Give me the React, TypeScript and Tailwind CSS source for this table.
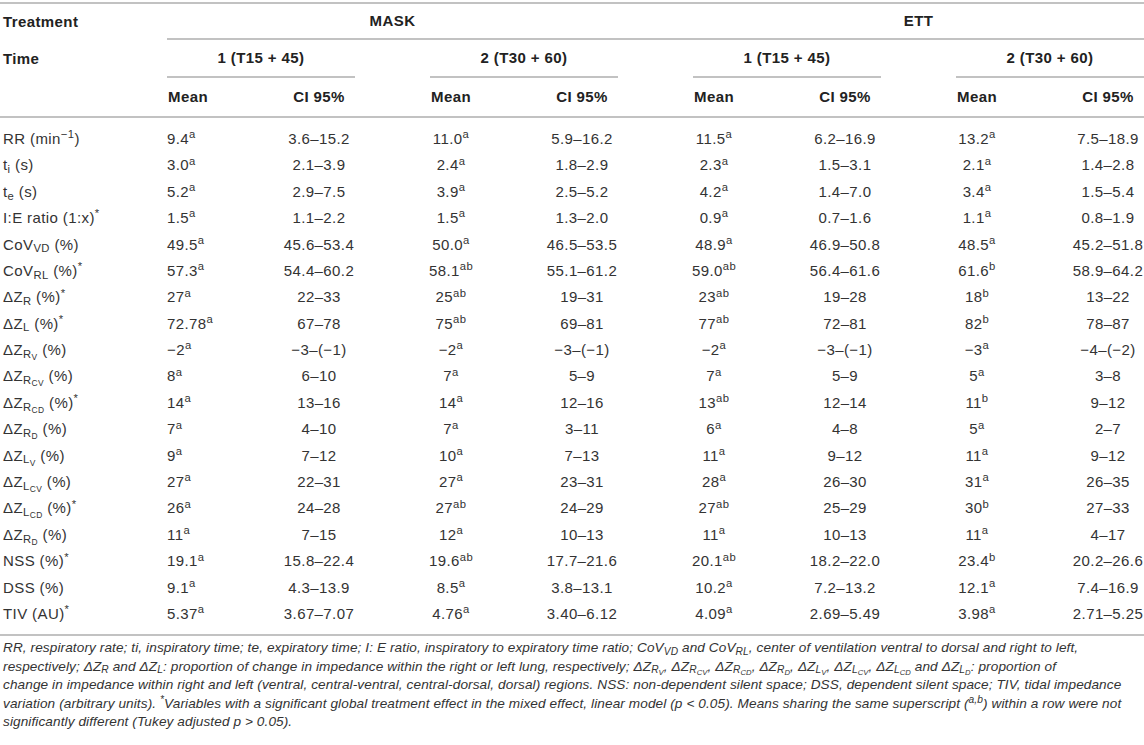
import React from "react";

type Val = [string, string, string]; // mean, superscript, CI

const Row = ({ label, vals }: { label: React.ReactNode; vals: Val[] }) => (
  <div className="flex h-[26.4px] items-center">
    <div className="w-[167px] pl-[3px] whitespace-nowrap">{label}</div>
    {vals.map((v, i) => (
      <div key={i} className={i > 0 ? "ml-[75px] flex w-[188px]" : "flex w-[188px]"}>
        <div className={i === 0 ? "flex w-[42px] justify-start whitespace-nowrap" : "flex w-[42px] justify-center whitespace-nowrap"}>
          <span>
            {v[0]}
            <sup>{v[1]}</sup>
          </span>
        </div>
        <div className="w-[74px]" />
        <div className="flex w-[72px] justify-center whitespace-nowrap">{v[2]}</div>
      </div>
    ))}
  </div>
);

const DZ = ({ a, b, star }: { a: string; b?: string; star?: boolean }) => (
  <>
    ΔZ
    <sub>
      {a}
      {b && <sub>{b}</sub>}
    </sub>{" "}
    (%){star && <sup>*</sup>}
  </>
);

const rows: { label: React.ReactNode; vals: Val[] }[] = [
  {
    label: (
      <>
        RR (min<sup>−1</sup>)
      </>
    ),
    vals: [["9.4", "a", "3.6–15.2"], ["11.0", "a", "5.9–16.2"], ["11.5", "a", "6.2–16.9"], ["13.2", "a", "7.5–18.9"]],
  },
  {
    label: (
      <>
        t<sub>i</sub> (s)
      </>
    ),
    vals: [["3.0", "a", "2.1–3.9"], ["2.4", "a", "1.8–2.9"], ["2.3", "a", "1.5–3.1"], ["2.1", "a", "1.4–2.8"]],
  },
  {
    label: (
      <>
        t<sub>e</sub> (s)
      </>
    ),
    vals: [["5.2", "a", "2.9–7.5"], ["3.9", "a", "2.5–5.2"], ["4.2", "a", "1.4–7.0"], ["3.4", "a", "1.5–5.4"]],
  },
  {
    label: (
      <>
        I:E ratio (1:x)<sup>*</sup>
      </>
    ),
    vals: [["1.5", "a", "1.1–2.2"], ["1.5", "a", "1.3–2.0"], ["0.9", "a", "0.7–1.6"], ["1.1", "a", "0.8–1.9"]],
  },
  {
    label: (
      <>
        CoV<sub>VD</sub> (%)
      </>
    ),
    vals: [["49.5", "a", "45.6–53.4"], ["50.0", "a", "46.5–53.5"], ["48.9", "a", "46.9–50.8"], ["48.5", "a", "45.2–51.8"]],
  },
  {
    label: (
      <>
        CoV<sub>RL</sub> (%)<sup>*</sup>
      </>
    ),
    vals: [["57.3", "a", "54.4–60.2"], ["58.1", "ab", "55.1–61.2"], ["59.0", "ab", "56.4–61.6"], ["61.6", "b", "58.9–64.2"]],
  },
  { label: <DZ a="R" star />, vals: [["27", "a", "22–33"], ["25", "ab", "19–31"], ["23", "ab", "19–28"], ["18", "b", "13–22"]] },
  { label: <DZ a="L" star />, vals: [["72.78", "a", "67–78"], ["75", "ab", "69–81"], ["77", "ab", "72–81"], ["82", "b", "78–87"]] },
  { label: <DZ a="R" b="V" />, vals: [["−2", "a", "−3–(−1)"], ["−2", "a", "−3–(−1)"], ["−2", "a", "−3–(−1)"], ["−3", "a", "−4–(−2)"]] },
  { label: <DZ a="R" b="CV" />, vals: [["8", "a", "6–10"], ["7", "a", "5–9"], ["7", "a", "5–9"], ["5", "a", "3–8"]] },
  { label: <DZ a="R" b="CD" star />, vals: [["14", "a", "13–16"], ["14", "a", "12–16"], ["13", "ab", "12–14"], ["11", "b", "9–12"]] },
  { label: <DZ a="R" b="D" />, vals: [["7", "a", "4–10"], ["7", "a", "3–11"], ["6", "a", "4–8"], ["5", "a", "2–7"]] },
  { label: <DZ a="L" b="V" />, vals: [["9", "a", "7–12"], ["10", "a", "7–13"], ["11", "a", "9–12"], ["11", "a", "9–12"]] },
  { label: <DZ a="L" b="CV" />, vals: [["27", "a", "22–31"], ["27", "a", "23–31"], ["28", "a", "26–30"], ["31", "a", "26–35"]] },
  { label: <DZ a="L" b="CD" star />, vals: [["26", "a", "24–28"], ["27", "ab", "24–29"], ["27", "ab", "25–29"], ["30", "b", "27–33"]] },
  { label: <DZ a="R" b="D" />, vals: [["11", "a", "7–15"], ["12", "a", "10–13"], ["11", "a", "10–13"], ["11", "a", "4–17"]] },
  {
    label: (
      <>
        NSS (%)<sup>*</sup>
      </>
    ),
    vals: [["19.1", "a", "15.8–22.4"], ["19.6", "ab", "17.7–21.6"], ["20.1", "ab", "18.2–22.0"], ["23.4", "b", "20.2–26.6"]],
  },
  { label: <>DSS (%)</>, vals: [["9.1", "a", "4.3–13.9"], ["8.5", "a", "3.8–13.1"], ["10.2", "a", "7.2–13.2"], ["12.1", "a", "7.4–16.9"]] },
  {
    label: (
      <>
        TIV (AU)<sup>*</sup>
      </>
    ),
    vals: [["5.37", "a", "3.67–7.07"], ["4.76", "a", "3.40–6.12"], ["4.09", "a", "2.69–5.49"], ["3.98", "a", "2.71–5.25"]],
  },
];

const Fz = ({ a, b }: { a: string; b?: string }) => (
  <>
    ΔZ
    <sub>
      {a}
      {b && <sub>{b}</sub>}
    </sub>
  </>
);

export default function App() {
  const times = ["1 (T15 + 45)", "2 (T30 + 60)", "1 (T15 + 45)", "2 (T30 + 60)"];
  return (
    <div className="w-[1144px] h-[745px] bg-white font-['Liberation_Sans',Arial,sans-serif] text-[#333] text-[15px] tracking-[0.4px]">
      <div className="mt-[2px] h-[2px] bg-[#c2c2c2]" />

      {/* treatment */}
      <div className="flex h-[36px] font-bold text-[#222]">
        <div className="w-[167px] pl-[3px] flex items-center">Treatment</div>
        <div className="flex flex-1 border-b-2 border-[#c2c2c2]">
          <div className="flex w-[451px] items-center justify-center">MASK</div>
          <div className="w-[75px]" />
          <div className="flex w-[451px] items-center justify-center">ETT</div>
        </div>
      </div>

      {/* time */}
      <div className="flex h-[38px] font-bold text-[#222]">
        <div className="w-[167px] pl-[3px] flex items-center">Time</div>
        {times.map((t, i) => (
          <div
            key={i}
            className={
              i > 0
                ? "ml-[75px] flex w-[188px] items-center justify-center border-b-2 border-[#c2c2c2]"
                : "flex w-[188px] items-center justify-center border-b-2 border-[#c2c2c2]"
            }
          >
            {t}
          </div>
        ))}
      </div>

      {/* mean / ci */}
      <div className="flex h-[40px] font-bold text-[#222] border-b-2 border-[#c2c2c2]">
        <div className="w-[167px]" />
        {times.map((_, i) => (
          <div key={i} className={i > 0 ? "ml-[75px] flex w-[188px] items-center" : "flex w-[188px] items-center"}>
            <div className="flex w-[42px] justify-center">Mean</div>
            <div className="w-[74px]" />
            <div className="flex w-[72px] justify-center whitespace-nowrap">CI 95%</div>
          </div>
        ))}
      </div>

      <div className="pt-[8px] pb-[7px] border-b-2 border-[#c2c2c2]">
        {rows.map((r, i) => (
          <Row key={i} label={r.label} vals={r.vals} />
        ))}
      </div>

      <p className="pt-[3px] pl-[3px] italic text-[13.6px] leading-[18.4px] tracking-[0.1px] text-[#333]">
        RR, respiratory rate; ti, inspiratory time; te, expiratory time; I: E ratio, inspiratory to expiratory time ratio; CoV<sub>VD</sub> and CoV
        <sub>RL</sub>, center of ventilation ventral to dorsal and right to left,
        <br />
        respectively; <Fz a="R" /> and <Fz a="L" />: proportion of change in impedance within the right or left lung, respectively; <Fz a="R" b="V" />,{" "}
        <Fz a="R" b="CV" />, <Fz a="R" b="CD" />, <Fz a="R" b="D" />, <Fz a="L" b="V" />, <Fz a="L" b="CV" />, <Fz a="L" b="CD" /> and{" "}
        <Fz a="L" b="D" />: proportion of
        <br />
        change in impedance within right and left (ventral, central-ventral, central-dorsal, dorsal) regions. NSS: non-dependent silent space; DSS,
        dependent silent space; TIV, tidal impedance
        <br />
        variation (arbitrary units). <sup>*</sup>Variables with a significant global treatment effect in the mixed effect, linear model (p &lt; 0.05).
        Means sharing the same superscript (<sup>a,b</sup>) within a row were not
        <br />
        significantly different (Tukey adjusted p &gt; 0.05).
      </p>
    </div>
  );
}
